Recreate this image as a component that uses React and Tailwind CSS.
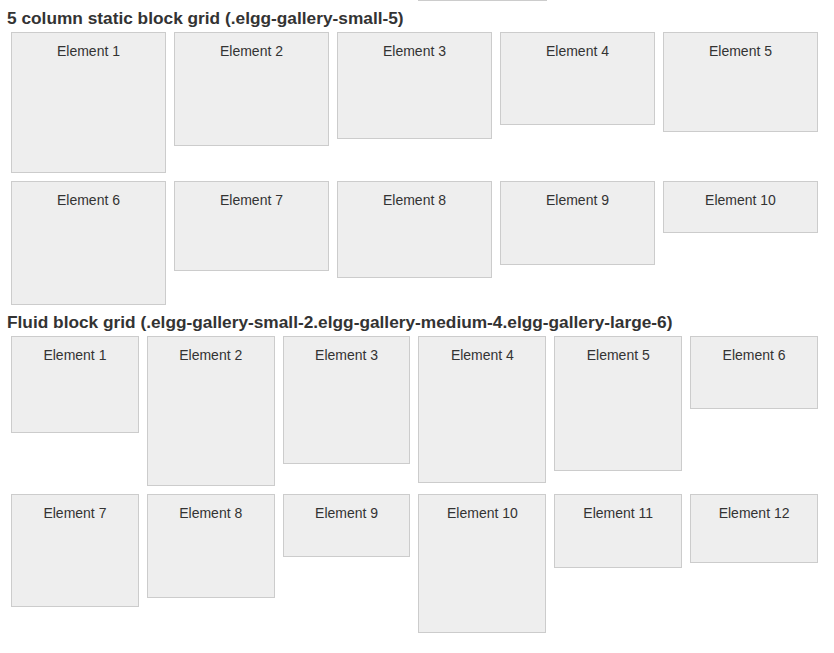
import React from 'react';

// heights of each tile (border included), in the order they appear
const staticGrid = [141, 114, 107, 93, 100, 124, 90, 97, 84, 52];
const fluidGrid = [97, 150, 128, 147, 135, 73, 113, 104, 63, 139, 74, 69];

function Tile({ label, height }) {
  return (
    <div className="p-1">
      <div
        className="border border-[#cccccc] bg-[#eeeeee] pt-[9px] text-center text-[14px] leading-[18px] text-[#333333]"
        style={{ height }}
      >
        {label}
      </div>
    </div>
  );
}

export default function App() {
  return (
    <div className="min-h-[653px] bg-white pl-[7px] font-['Liberation_Sans',Arial,sans-serif] text-[#333333]">
      <div className="ml-[411px] h-px w-[129px] bg-[#cccccc]" />

      <h3 className="mt-[7px] text-[17.3px] font-bold leading-[20px]">
        5 column static block grid (.elgg-gallery-small-5)
      </h3>
      <div className="grid w-[815px] grid-cols-5 items-start">
        {staticGrid.map((h, i) => (
          <Tile key={i} label={`Element ${i + 1}`} height={h} />
        ))}
      </div>

      <h3 className="mt-[3px] text-[17.3px] font-bold leading-[20px]">
        Fluid block grid (.elgg-gallery-small-2.elgg-gallery-medium-4.elgg-gallery-large-6)
      </h3>
      <div className="grid w-[815px] grid-cols-6 items-start">
        {fluidGrid.map((h, i) => (
          <Tile key={i} label={`Element ${i + 1}`} height={h} />
        ))}
      </div>
    </div>
  );
}
